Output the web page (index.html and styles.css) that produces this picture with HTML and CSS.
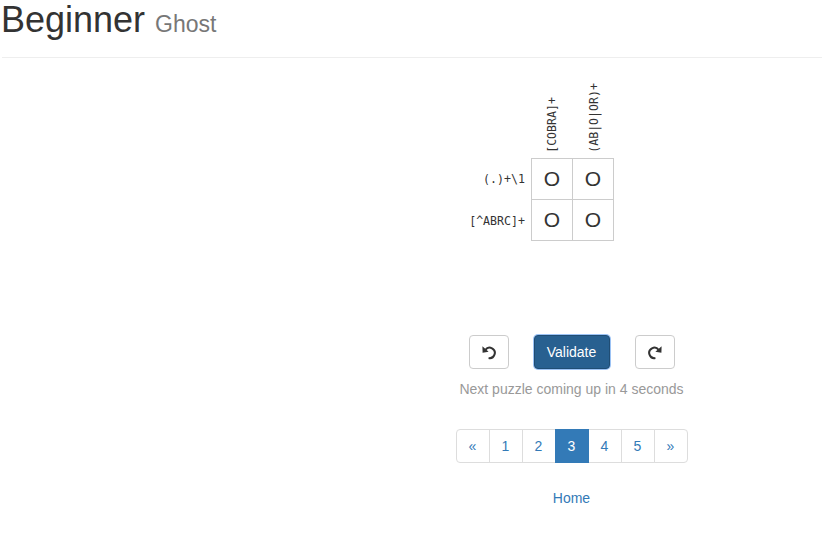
FILE: index.html
```html
<!DOCTYPE html>
<html>
<head>
<meta charset="utf-8">
<title>Beginner Ghost</title>
<link rel="stylesheet" href="styles.css">
</head>
<body>
<header class="page-header">
  <h1 class="title">Beginner <small class="subtitle">Ghost</small></h1>
</header>
<hr class="rule">
<main class="main">
  <div class="content">
    <div class="puzzle">
      <div class="corner"></div>
      <div class="colhead"><span class="vtext">[COBRA]+</span></div>
      <div class="colhead"><span class="vtext">(AB|O|OR)+</span></div>
      <div class="corner"></div>

      <div class="rowhead">(.)+\1</div>
      <div class="cell top left">O</div>
      <div class="cell top">O</div>
      <div class="corner"></div>

      <div class="rowhead">[^ABRC]+</div>
      <div class="cell left">O</div>
      <div class="cell">O</div>
      <div class="corner"></div>
    </div>

    <div class="controls">
      <button class="btn btn-icon" type="button" aria-label="Undo">
        <svg width="16" height="16" viewBox="0 0 16 16"><path d="M4.4 5.8 A5.2 5.2 0 1 1 7.6 14" fill="none" stroke="#333" stroke-width="2"/><path d="M1.4 2.2 L1.6 8.8 L7.6 7.8 Z" fill="#333"/></svg>
      </button>
      <button class="btn btn-primary" type="button">Validate</button>
      <button class="btn btn-icon" type="button" aria-label="Redo">
        <svg width="16" height="16" viewBox="0 0 16 16"><path d="M11.6 5.8 A5.2 5.2 0 1 0 8.4 14" fill="none" stroke="#333" stroke-width="2"/><path d="M14.6 2.2 L14.4 8.8 L8.4 7.8 Z" fill="#333"/></svg>
      </button>
    </div>

    <p class="status">Next puzzle coming up in 4 seconds</p>

    <ul class="pagination">
      <li class="page"><a href="#">«</a></li>
      <li class="page"><a href="#">1</a></li>
      <li class="page"><a href="#">2</a></li>
      <li class="page active"><a href="#">3</a></li>
      <li class="page"><a href="#">4</a></li>
      <li class="page"><a href="#">5</a></li>
      <li class="page"><a href="#">»</a></li>
    </ul>

    <p class="home"><a href="#">Home</a></p>
  </div>
</main>
</body>
</html>
```

FILE: styles.css
```css
* { box-sizing: border-box; }

body {
  margin: 0;
  font-family: "Liberation Sans", Arial, Helvetica, sans-serif;
  font-size: 14px;
  line-height: 20px;
  color: #333;
  background: #fff;
}

.page-header {
  padding-bottom: 17px;
}

.title {
  margin: 0;
  padding-left: 1px;
  font-size: 36px;
  line-height: 40px;
  height: 40px;
  font-weight: 500;
  color: #333;
}

.subtitle {
  font-size: 23px;
  line-height: 1;
  color: #777;
  font-weight: 400;
}

.rule {
  margin: 0 1px 0 2px;
  border: 0;
  border-top: 1px solid #eee;
  height: 0;
}

.main {
  padding-left: 320px;
}

.content {
  display: flex;
  flex-direction: column;
  align-items: center;
}

.puzzle {
  display: grid;
  grid-template-columns: 64px 42px 41px 62px;
  grid-template-rows: 100px 42px 41px;
}

.colhead {
  display: flex;
  flex-direction: column;
  justify-content: flex-end;
  align-items: center;
  padding-bottom: 5px;
}

.vtext {
  writing-mode: vertical-rl;
  transform: rotate(180deg);
  font-family: "DejaVu Sans Mono", "Liberation Mono", monospace;
  font-size: 11.6px;
  line-height: 12px;
  color: #333;
}

.rowhead {
  display: flex;
  align-items: center;
  justify-content: flex-end;
  padding-right: 6px;
  font-family: "DejaVu Sans Mono", "Liberation Mono", monospace;
  font-size: 11.6px;
  color: #333;
}

.cell {
  display: flex;
  align-items: center;
  justify-content: center;
  border-right: 1px solid #ccc;
  border-bottom: 1px solid #ccc;
  font-size: 21px;
  color: #333;
}

.cell.top { border-top: 1px solid #ccc; }
.cell.left { border-left: 1px solid #ccc; }

.controls {
  display: flex;
  gap: 25px;
  margin-top: 94px;
}

.btn {
  height: 34px;
  padding: 6px 12px;
  border: 1px solid #ccc;
  border-radius: 4px;
  background: #fff;
  font-family: inherit;
  font-size: 14px;
  line-height: 20px;
  color: #333;
  display: flex;
  align-items: center;
  justify-content: center;
}

.btn-icon {
  width: 40px;
  padding: 0;
}

.btn-primary {
  width: 76px;
  padding: 0;
  background: #286090;
  border-color: #204d74;
  color: #fff;
  box-shadow: 0 0 0 1px #9cc3f5;
}

.status {
  margin: 10px 0 0;
  color: #999;
}

.pagination {
  display: flex;
  list-style: none;
  margin: 30px 0 0;
  padding: 0;
}

.page a {
  display: block;
  height: 34px;
  min-width: 34px;
  padding: 6px 12px;
  margin-left: -1px;
  border: 1px solid #ddd;
  background: #fff;
  color: #337ab7;
  text-decoration: none;
  text-align: center;
  line-height: 20px;
}

.page:first-child a {
  margin-left: 0;
  border-radius: 4px 0 0 4px;
}

.page:last-child a {
  border-radius: 0 4px 4px 0;
}

.page.active a {
  background: #337ab7;
  border-color: #337ab7;
  color: #fff;
  position: relative;
  z-index: 1;
}

.home {
  margin: 25px 0 0;
}

.home a {
  color: #337ab7;
  text-decoration: none;
}
```
